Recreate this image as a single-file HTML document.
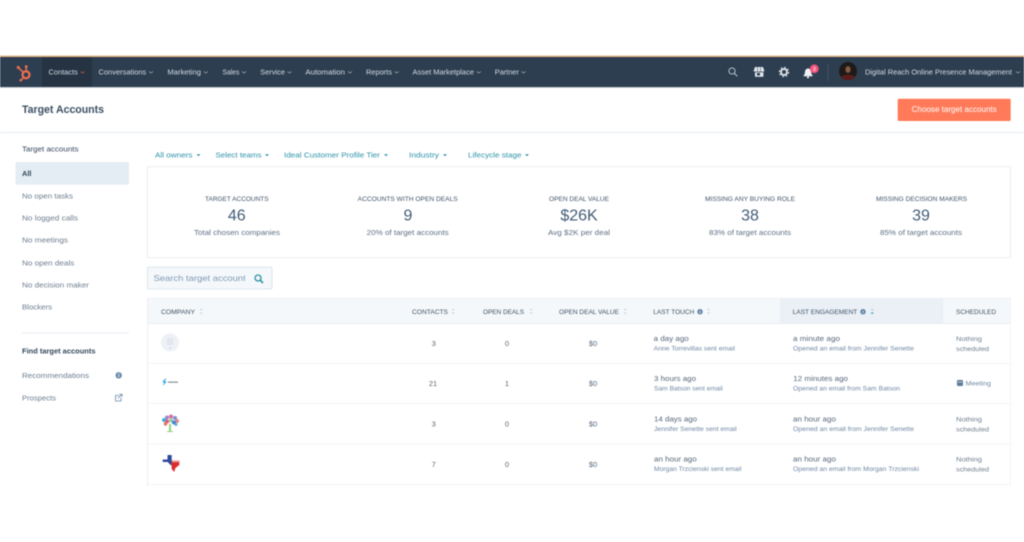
<!DOCTYPE html>
<html><head><meta charset="utf-8"><title>Target Accounts</title>
<style>
html,body{margin:0;padding:0;background:#fff;width:1024px;height:542px;overflow:hidden}
svg{display:block;filter:blur(.5px)}
text{font-family:"Liberation Sans",sans-serif;fill:#33475b}
.n{font-size:7.5px;fill:#d5dde6}
.f{font-size:7.5px;fill:#2b93a8}
.s{font-size:7.5px;fill:#6b7c8e}
.b{font-size:7.5px;fill:#33475b;font-weight:bold}
.h{font-size:6.5px;fill:#3f5266}
.st{font-size:7.5px;fill:#5d6f82}
.big{font-size:16px;fill:#425b76;text-anchor:middle}
.t{font-size:7.5px;fill:#55677a}
.d{font-size:6.5px;fill:#6f88a3}
.fc{fill:#2b93a8}
</style></head><body>
<svg width="1024" height="542" viewBox="0 0 1024 542" xmlns="http://www.w3.org/2000/svg">
<defs><clipPath id="sc"><rect x="153" y="270" width="92" height="16"/></clipPath></defs>
<rect width="1024" height="542" fill="#fff"/>
<!-- nav -->
<rect x="0" y="55.5" width="1024" height="1.5" fill="#e3b787"/>
<rect x="0" y="57" width="1024" height="30" fill="#2d3e50"/>
<rect x="0" y="87" width="1024" height="1" fill="#c9ced4"/>
<rect x="42" y="57" width="50" height="30" fill="#253342"/>
<!-- sprocket logo -->
<g stroke="#f0704f" fill="none">
<circle cx="26" cy="74.8" r="3.5" stroke-width="2.2"/>
<path d="M26.2 71.2V67.3M23.6 72.4L18.4 67.8M23.6 77.6L21 80" stroke-width="1.5"/>
</g>
<circle cx="26.2" cy="66.6" r="1.4" fill="#f0704f"/><circle cx="18.2" cy="67.4" r="1.5" fill="#f0704f"/><circle cx="20.8" cy="80.2" r="1.3" fill="#f0704f"/>
<text class="n" x="48.5" y="74.7" textLength="29.3" lengthAdjust="spacingAndGlyphs">Contacts</text>
<text class="n" x="98.5" y="74.7" textLength="47.8" lengthAdjust="spacingAndGlyphs">Conversations</text>
<text class="n" x="167.4" y="74.7" textLength="33.6" lengthAdjust="spacingAndGlyphs">Marketing</text>
<text class="n" x="222.5" y="74.7" textLength="16.8" lengthAdjust="spacingAndGlyphs">Sales</text>
<text class="n" x="260.3" y="74.7" textLength="24.7" lengthAdjust="spacingAndGlyphs">Service</text>
<text class="n" x="305.4" y="74.7" textLength="39.6" lengthAdjust="spacingAndGlyphs">Automation</text>
<text class="n" x="366" y="74.7" textLength="25.9" lengthAdjust="spacingAndGlyphs">Reports</text>
<text class="n" x="412.5" y="74.7" textLength="61.5" lengthAdjust="spacingAndGlyphs">Asset Marketplace</text>
<text class="n" x="494.8" y="74.7" textLength="24.2" lengthAdjust="spacingAndGlyphs">Partner</text>
<g fill="none" stroke="#aab6c2" stroke-width=".7">
<path d="M80.6 71.5l2 1.6 2-1.6" stroke="#d9694f"/>
<path d="M149 71.5l2 1.6 2-1.6M203.8 71.5l2 1.6 2-1.6M242 71.5l2 1.6 2-1.6M287.5 71.5l2 1.6 2-1.6M348 71.5l2 1.6 2-1.6M394.6 71.5l2 1.6 2-1.6M476.8 71.5l2 1.6 2-1.6M521.5 71.5l2 1.6 2-1.6M1016 71.5l2 1.6 2-1.6"/>
</g>
<!-- nav right icons -->
<circle cx="732" cy="71" r="3.1" fill="none" stroke="#c5cfd9" stroke-width=".9"/>
<path d="M734.3 73.3l3 3" stroke="#c5cfd9" stroke-width="1"/>
<path d="M755 67h8l1.2 3.5v1h-10.4v-1zM755 72.3h8.4v4.5h-8.4z" fill="#e3e8ee"/>
<path d="M757.5 67.3v4M760.5 67.3v4" stroke="#2d3e50" stroke-width=".5"/>
<rect x="757" y="73" width="3" height="2.5" fill="#2d3e50"/>
<circle cx="784" cy="72" r="3" fill="none" stroke="#e3e8ee" stroke-width="1.8"/>
<circle cx="784" cy="72" r="4.6" fill="none" stroke="#e3e8ee" stroke-width="1.1" stroke-dasharray="1.8 1.8"/>
<path d="M803.5 75.5c1.5-1 1.3-3 1.6-4.4.3-1.6 1.6-2.6 3-2.6s2.7 1 3 2.6c.3 1.4.1 3.4 1.6 4.4v.8h-9.2z" fill="#eef1f5"/>
<circle cx="808" cy="77.3" r="1.1" fill="#eef1f5"/>
<circle cx="814.3" cy="68.8" r="4.4" fill="#f2547d"/>
<text x="814.3" y="70.8" style="font-size:5.5px;fill:#fff;text-anchor:middle">3</text>
<rect x="827.5" y="64" width=".7" height="17" fill="#46586b"/>
<circle cx="848" cy="71" r="9" fill="#1e1a18"/>
<ellipse cx="848" cy="69.5" rx="2.6" ry="3.4" fill="#8a5a42"/>
<path d="M841 77c2-3 12-3 14 0l-3 3h-8z" fill="#5a1d1c"/>
<text class="n" x="865" y="74.7" textLength="147" lengthAdjust="spacingAndGlyphs">Digital Reach Online Presence Management</text>
<!-- header -->
<text x="22" y="113" style="font-size:11px;font-weight:bold;fill:#3a4e62" textLength="82" lengthAdjust="spacingAndGlyphs">Target Accounts</text>
<rect x="897.7" y="98.7" width="113" height="22.3" rx="1.5" fill="#ff7a59"/>
<text x="911.7" y="111.8" style="font-size:7.8px;fill:#fff" textLength="85" lengthAdjust="spacingAndGlyphs">Choose target accounts</text>
<rect x="0" y="132" width="1024" height="1" fill="#e6ecf2"/>
<!-- sidebar -->
<text class="b" x="22" y="151.4" textLength="56.5" lengthAdjust="spacingAndGlyphs" style="font-weight:normal;-webkit-text-stroke:.2px #33475b">Target accounts</text>
<rect x="15.5" y="162" width="113.5" height="22.7" rx="1.5" fill="#e5edf4"/>
<text class="b" x="22" y="176" textLength="9.5" lengthAdjust="spacingAndGlyphs">All</text>
<text class="s" x="22" y="198.4" textLength="51" lengthAdjust="spacingAndGlyphs">No open tasks</text>
<text class="s" x="22" y="220.4" textLength="56" lengthAdjust="spacingAndGlyphs">No logged calls</text>
<text class="s" x="22" y="242.7" textLength="46" lengthAdjust="spacingAndGlyphs">No meetings</text>
<text class="s" x="22" y="265.4" textLength="52.3" lengthAdjust="spacingAndGlyphs">No open deals</text>
<text class="s" x="22" y="287.7" textLength="67" lengthAdjust="spacingAndGlyphs">No decision maker</text>
<text class="s" x="22" y="309.7" textLength="30" lengthAdjust="spacingAndGlyphs">Blockers</text>
<rect x="22" y="332.5" width="107" height="1" fill="#e6ecf2"/>
<text class="b" x="22" y="353.7" textLength="73.5" lengthAdjust="spacingAndGlyphs">Find target accounts</text>
<text class="s" x="22" y="378.2" textLength="67" lengthAdjust="spacingAndGlyphs">Recommendations</text>
<circle cx="118.7" cy="375.3" r="3.2" fill="#6a8bab"/>
<rect x="118.3" y="374.7" width=".9" height="2.3" fill="#fff"/><rect x="118.3" y="373.2" width=".9" height=".9" fill="#fff"/>
<text class="s" x="22" y="400.7" textLength="34" lengthAdjust="spacingAndGlyphs">Prospects</text>
<path d="M119 395.5h-3.5v5.5h5.5v-3.3M118 398.3l3.8-3.8M119.3 394.3h2.7v2.7" fill="none" stroke="#6a8bab" stroke-width=".8"/>
<!-- filters -->
<text class="f" x="155" y="157.7" textLength="37.4" lengthAdjust="spacingAndGlyphs">All owners</text>
<text class="f" x="215.5" y="157.7" textLength="46" lengthAdjust="spacingAndGlyphs">Select teams</text>
<text class="f" x="284" y="157.7" textLength="96" lengthAdjust="spacingAndGlyphs">Ideal Customer Profile Tier</text>
<text class="f" x="409" y="157.7" textLength="30" lengthAdjust="spacingAndGlyphs">Industry</text>
<text class="f" x="468" y="157.7" textLength="53.5" lengthAdjust="spacingAndGlyphs">Lifecycle stage</text>
<path class="fc" d="M196.5 154.3h4l-2 2zM265 154.3h4l-2 2zM384 154.3h4l-2 2zM443 154.3h4l-2 2zM525 154.3h4l-2 2z"/>
<!-- stats card -->
<rect x="147.5" y="166.7" width="863" height="91" fill="#fff" stroke="#e4eaf1" stroke-width=".8"/>
<text class="h" x="205" y="200.8" textLength="63.6" lengthAdjust="spacingAndGlyphs">TARGET ACCOUNTS</text>
<text class="big" x="236.8" y="220.6">46</text>
<text class="st" x="194" y="235.2" textLength="86" lengthAdjust="spacingAndGlyphs">Total chosen companies</text>
<text class="h" x="357.7" y="200.8" textLength="100" lengthAdjust="spacingAndGlyphs">ACCOUNTS WITH OPEN DEALS</text>
<text class="big" x="408" y="220.6">9</text>
<text class="st" x="366.7" y="235.2" textLength="82" lengthAdjust="spacingAndGlyphs">20% of target accounts</text>
<text class="h" x="549" y="200.8" textLength="60" lengthAdjust="spacingAndGlyphs">OPEN DEAL VALUE</text>
<text class="big" x="579" y="220.6">$26K</text>
<text class="st" x="548" y="235.2" textLength="62" lengthAdjust="spacingAndGlyphs">Avg $2K per deal</text>
<text class="h" x="705" y="200.8" textLength="90" lengthAdjust="spacingAndGlyphs">MISSING ANY BUYING ROLE</text>
<text class="big" x="750" y="220.6">38</text>
<text class="st" x="709" y="235.2" textLength="82" lengthAdjust="spacingAndGlyphs">83% of target accounts</text>
<text class="h" x="876" y="200.8" textLength="91" lengthAdjust="spacingAndGlyphs">MISSING DECISION MAKERS</text>
<text class="big" x="921" y="220.6">39</text>
<text class="st" x="880" y="235.2" textLength="82" lengthAdjust="spacingAndGlyphs">85% of target accounts</text>
<!-- search -->
<rect x="147.5" y="267" width="124.5" height="22" rx="1.5" fill="#f5f8fa" stroke="#d3dee8" stroke-width=".8"/>
<g clip-path="url(#sc)"><text x="153.5" y="281" style="font-size:8.2px;fill:#7c98b6" textLength="97" lengthAdjust="spacingAndGlyphs">Search target accounts</text></g>
<circle cx="258" cy="278" r="3" fill="none" stroke="#2b93a8" stroke-width="1.3"/>
<path d="M260.2 280.2l2.8 2.8" stroke="#2b93a8" stroke-width="1.6"/>
<!-- table -->
<rect x="147.5" y="298" width="863" height="25.5" fill="#f5f8fa"/>
<rect x="780" y="298" width="163.3" height="25.5" fill="#eaf0f6"/>
<rect x="147.5" y="298" width="863" height=".7" fill="#e8eef4"/>
<rect x="147.5" y="323.2" width="863" height=".8" fill="#e6ecf2"/>
<rect x="147.2" y="298" width=".8" height="188" fill="#e6ecf2"/>
<rect x="1010" y="298" width=".8" height="188" fill="#eef2f6"/>
<rect x="148" y="363" width="862" height=".8" fill="#edf1f5"/>
<rect x="148" y="403" width="862" height=".8" fill="#edf1f5"/>
<rect x="148" y="443.5" width="862" height=".8" fill="#edf1f5"/>
<rect x="148" y="484" width="862" height=".8" fill="#edf1f5"/>
<text class="h" x="161" y="314" textLength="34" lengthAdjust="spacingAndGlyphs">COMPANY</text>
<text class="h" x="412" y="314" textLength="36" lengthAdjust="spacingAndGlyphs">CONTACTS</text>
<text class="h" x="483" y="314" textLength="41" lengthAdjust="spacingAndGlyphs">OPEN DEALS</text>
<text class="h" x="559" y="314" textLength="60" lengthAdjust="spacingAndGlyphs">OPEN DEAL VALUE</text>
<text class="h" x="653.3" y="314" textLength="41" lengthAdjust="spacingAndGlyphs">LAST TOUCH</text>
<text class="h" x="792.7" y="314" textLength="64.6" lengthAdjust="spacingAndGlyphs">LAST ENGAGEMENT</text>
<text class="h" x="956" y="314" textLength="40" lengthAdjust="spacingAndGlyphs">SCHEDULED</text>
<path d="M199.7 310.3l1.5-1.8 1.5 1.8zM199.7 312.5l1.5 1.8 1.5-1.8zM451.7 310.3l1.5-1.8 1.5 1.8zM451.7 312.5l1.5 1.8 1.5-1.8zM529.7 310.3l1.5-1.8 1.5 1.8zM529.7 312.5l1.5 1.8 1.5-1.8zM623.7 310.3l1.5-1.8 1.5 1.8zM623.7 312.5l1.5 1.8 1.5-1.8zM707 310.3l1.5-1.8 1.5 1.8zM707 312.5l1.5 1.8 1.5-1.8z" fill="#c3d0dc"/>
<path d="M870.7 310.3l1.5-1.8 1.5 1.8z" fill="#b5c4d2"/><path d="M870.7 312.5l1.5 1.8 1.5-1.8z" fill="#1f9fb8"/>
<circle cx="700" cy="311.7" r="2.7" fill="#5f83a6"/><circle cx="863" cy="311.7" r="2.7" fill="#5f83a6"/>
<rect x="699.6" y="310.8" width=".8" height="2.2" fill="#fff"/><rect x="862.6" y="310.8" width=".8" height="2.2" fill="#fff"/>
<!-- logos -->
<circle cx="170" cy="342.5" r="9" fill="#eef1f6"/>
<rect x="167" y="338" width="6" height="7" fill="#e2e7ee"/><circle cx="170" cy="348" r="1.2" fill="#dbe1e9"/>
<path d="M165.5 378.5l-3.5 3.6h2.2l-1.4 3.8 4-4.4h-2.2l1.8-3z" fill="#2aa6d9"/>
<rect x="168" y="381.6" width="10" height="1.1" fill="#7a8590"/>
<!-- tree -->
<rect x="169" y="424" width="2" height="7" fill="#8fd67a"/>
<path d="M167 431h6v1h-6z" fill="#8fd67a"/>
<g>
<circle cx="164" cy="420" r="2" fill="#36b6d6"/><circle cx="167" cy="417.5" r="2" fill="#a884c8"/><circle cx="171" cy="416.5" r="2" fill="#d96c9e"/><circle cx="175" cy="418" r="2" fill="#7f8fd6"/><circle cx="177" cy="421" r="2" fill="#e08a8a"/>
<circle cx="167" cy="421.5" r="2" fill="#e65a7a"/><circle cx="171" cy="420.5" r="2" fill="#8dd0a0"/><circle cx="174" cy="422.5" r="2" fill="#4a7fd6"/>
<circle cx="165.5" cy="424" r="1.7" fill="#e87060"/><circle cx="176" cy="424.5" r="1.5" fill="#5ab0d8"/>
</g>
<!-- texas -->
<path d="M167.5 455h4.2v6.5h-.2v4l-2-1.5-1.8-2h-5v-2.5h4.8z" fill="#2f4a9e"/>
<path d="M171.5 460.5h7.8v4.5l-3.9 3-1.2 4-2.5-3-.2-4z" fill="#dc2d2d"/>
<rect x="172" y="460.3" width="7.2" height="1.8" fill="#e9a5a5"/>
<!-- row numbers -->
<g style="font-size:7.5px">
<text class="t" x="433.7" y="345.8" text-anchor="middle">3</text><text class="t" x="507" y="345.8" text-anchor="middle">0</text><text class="t" x="593" y="345.8" text-anchor="middle">$0</text>
<text class="t" x="433" y="385.8" text-anchor="middle">21</text><text class="t" x="507" y="385.8" text-anchor="middle">1</text><text class="t" x="593" y="385.8" text-anchor="middle">$0</text>
<text class="t" x="433.7" y="426.3" text-anchor="middle">3</text><text class="t" x="507" y="426.3" text-anchor="middle">0</text><text class="t" x="593" y="426.3" text-anchor="middle">$0</text>
<text class="t" x="433.7" y="466.8" text-anchor="middle">7</text><text class="t" x="507" y="466.8" text-anchor="middle">0</text><text class="t" x="593" y="466.8" text-anchor="middle">$0</text>
</g>
<!-- row 1 -->
<text class="t" x="653.7" y="341.2" textLength="35" lengthAdjust="spacingAndGlyphs">a day ago</text>
<text class="d" x="653.7" y="350.4" textLength="81.3" lengthAdjust="spacingAndGlyphs">Anne Torrevillas sent email</text>
<text class="t" x="793" y="341.2" textLength="47" lengthAdjust="spacingAndGlyphs">a minute ago</text>
<text class="d" x="793" y="350.4" textLength="121" lengthAdjust="spacingAndGlyphs">Opened an email from Jennifer Senette</text>
<text class="d" x="956" y="341" textLength="26" lengthAdjust="spacingAndGlyphs" style="fill:#6d7f91">Nothing</text>
<text class="d" x="956" y="351" textLength="33" lengthAdjust="spacingAndGlyphs" style="fill:#6d7f91">scheduled</text>
<!-- row 2 -->
<text class="t" x="654" y="381.2" textLength="42" lengthAdjust="spacingAndGlyphs">3 hours ago</text>
<text class="d" x="654" y="390.4" textLength="68.7" lengthAdjust="spacingAndGlyphs">Sam Batson sent email</text>
<text class="t" x="793.3" y="381.2" textLength="54.7" lengthAdjust="spacingAndGlyphs">12 minutes ago</text>
<text class="d" x="793" y="390.4" textLength="107" lengthAdjust="spacingAndGlyphs">Opened an email from Sam Batson</text>
<rect x="957" y="380" width="6" height="6" rx="1" fill="#5d7a98"/><rect x="957.8" y="381.8" width="4.4" height=".6" fill="#fff"/>
<text class="d" x="965.5" y="385.5" textLength="25.5" lengthAdjust="spacingAndGlyphs">Meeting</text>
<!-- row 3 -->
<text class="t" x="654" y="421.7" textLength="43" lengthAdjust="spacingAndGlyphs">14 days ago</text>
<text class="d" x="654" y="430.9" textLength="82.7" lengthAdjust="spacingAndGlyphs">Jennifer Senette sent email</text>
<text class="t" x="793" y="421.7" textLength="43" lengthAdjust="spacingAndGlyphs">an hour ago</text>
<text class="d" x="793" y="430.9" textLength="121" lengthAdjust="spacingAndGlyphs">Opened an email from Jennifer Senette</text>
<text class="d" x="956" y="421.5" textLength="26" lengthAdjust="spacingAndGlyphs" style="fill:#6d7f91">Nothing</text>
<text class="d" x="956" y="431.5" textLength="33" lengthAdjust="spacingAndGlyphs" style="fill:#6d7f91">scheduled</text>
<!-- row 4 -->
<text class="t" x="654" y="461.7" textLength="42.7" lengthAdjust="spacingAndGlyphs">an hour ago</text>
<text class="d" x="654" y="470.9" textLength="87.5" lengthAdjust="spacingAndGlyphs">Morgan Trzcienski sent email</text>
<text class="t" x="793" y="461.7" textLength="43" lengthAdjust="spacingAndGlyphs">an hour ago</text>
<text class="d" x="793" y="470.9" textLength="126" lengthAdjust="spacingAndGlyphs">Opened an email from Morgan Trzcienski</text>
<text class="d" x="956" y="461.5" textLength="26" lengthAdjust="spacingAndGlyphs" style="fill:#6d7f91">Nothing</text>
<text class="d" x="956" y="471.5" textLength="33" lengthAdjust="spacingAndGlyphs" style="fill:#6d7f91">scheduled</text>
</svg>
</body></html>
